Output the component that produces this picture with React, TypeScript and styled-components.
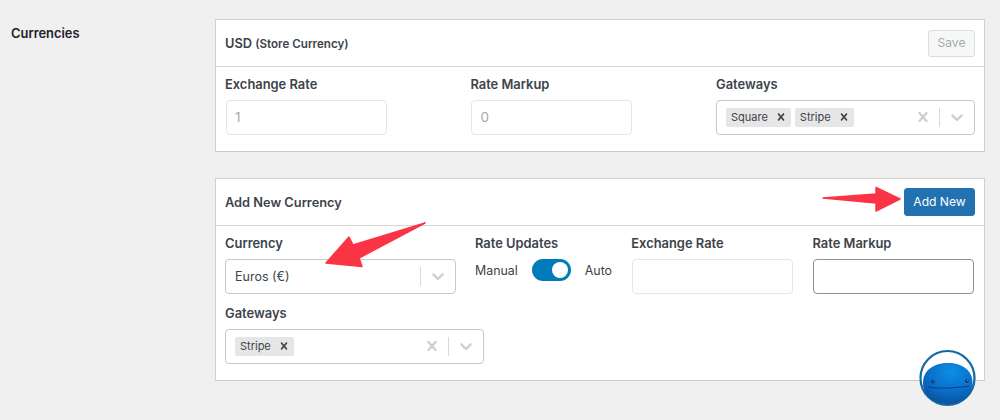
import React from "react";
import styled, { createGlobalStyle } from "styled-components";

const Global = createGlobalStyle`
  html, body { margin: 0; padding: 0; background: #f0f0f1; }
  body { font-family: Inter, "Liberation Sans", sans-serif; color: #3c434a; -webkit-font-smoothing: antialiased; }
  * { box-sizing: border-box; }
`;
const Page = styled.div`
  position: relative; width: 1000px; height: 420px; overflow: hidden;
  display: flex; padding-top: 19px; background: #f0f0f1;
`;
const SideLabel = styled.div`
  width: 215px; padding: 6px 0 0 11px; font-size: 12.9px; line-height: 18px; font-weight: 600; color: #1d2327;
`;
const Stack = styled.div`
  width: 770px; display: flex; flex-direction: column; gap: 26px;
`;
const Panel = styled.section`
  background: #fff; border: 1px solid #d0d0d2; border-bottom-color: #c9c9cb;
`;
const PanelHead = styled.header`
  height: 46px; padding: 0 9px; display: flex; align-items: center; justify-content: space-between;
  border-bottom: 1px solid #d6d6d8; box-sizing: content-box;
`;
const PanelTitle = styled.h3`
  margin: 0; padding-top: 1px; font-size: 12.8px; font-weight: 600; line-height: 18px; color: #3c434a;
  small { font-size: 11.6px; font-weight: 600; }
`;
const Button = styled.button<{ $primary?: boolean }>`
  height: ${p => (p.$primary ? 28 : 27)}px; width: ${p => (p.$primary ? 71 : 47)}px; padding: 0; border-radius: 3px;
  font: 400 ${p => (p.$primary ? 12.1 : 12)}px/1 Inter, "Liberation Sans", sans-serif;
  border: 1px solid ${p => (p.$primary ? "#2271b1" : "#dcdcde")};
  background: ${p => (p.$primary ? "#2271b1" : "#f6f7f7")};
  color: ${p => (p.$primary ? "#fff" : "#a7aaad")};
`;
const Body = styled.div`
  padding: 8px 9px 16.5px; display: flex; flex-direction: column; gap: 10.5px;
`;
const Row = styled.div`
  display: flex;
`;
const Field = styled.div<{ $w: number }>`
  width: ${p => p.$w}px; flex: none;
`;
const Label = styled.label`
  display: block; height: 18px; margin-bottom: 7px; padding-top: 1px; font-size: 12.9px; line-height: 18px; font-weight: 600; color: #3c434a;
`;
const TextInput = styled.input<{ $strong?: boolean }>`
  display: block; width: 160.5px; height: 34.5px; margin: 0 1px; padding: 0 8px; border-radius: 4px;
  font: 400 13.5px Inter, "Liberation Sans", sans-serif; color: #a7aaad; background: #fff; outline: none;
  border: 1px solid ${p => (p.$strong ? "#8c8f94" : "#e6e6e8")};
`;
const SelectBox = styled.div<{ $w: number }>`
  width: ${p => p.$w}px; height: 34.5px; display: flex; align-items: center; padding: 0 7px 0 9px;
  border: 1px solid #c8c8ca; border-radius: 4px; background: #fff;
`;
const SelectValues = styled.div`
  flex: 1; display: flex; align-items: center; gap: 4px; font-size: 12.5px; color: #3c434a;
`;
const Tag = styled.span`
  height: 19px; display: inline-flex; align-items: center; gap: 6px; padding: 0 3px 0 5px; background: #e6e6e6;
  border-radius: 2px; font-size: 11px; color: #3c434a;
  svg { fill: #3c434a; display: block; }
`;
const Indicator = styled.svg`
  width: 20px; height: 20px; fill: #cfcfcf; flex: none; display: block;
`;
const IndicatorBar = styled.span`
  width: 1px; height: 19px; background: #d8d8d8; margin: 0 7px 0 6px; flex: none;
`;
const ToggleRow = styled.div`
  display: flex; align-items: center; height: 22px; margin-top: 3px; font-size: 12.4px; color: #3c434a;
`;
const Track = styled.span`
  width: 39px; height: 22px; border-radius: 11px; background: #007cba; margin: 0 14px;
  display: flex; align-items: center; justify-content: flex-end; padding-right: 3px;
`;
const Knob = styled.span`
  width: 16px; height: 16px; border-radius: 50%; background: #fff;
`;
const Overlay = styled.svg`
  position: absolute; left: 0; top: 0; width: 1000px; height: 420px; pointer-events: none;
`;

const CLEAR = "M14.348 14.849c-0.469 0.469-1.229 0.469-1.697 0l-2.651-3.030-2.651 3.029c-0.469 0.469-1.229 0.469-1.697 0-0.469-0.469-0.469-1.229 0-1.697l2.758-3.15-2.759-3.152c-0.469-0.469-0.469-1.228 0-1.697s1.228-0.469 1.697 0l2.652 3.031 2.651-3.031c0.469-0.469 1.228-0.469 1.697 0s0.469 1.229 0 1.697l-2.758 3.152 2.758 3.15c0.469 0.469 0.469 1.229 0 1.698z";
const CHEV = "M4.516 7.548c0.436-0.446 1.043-0.481 1.576 0l3.908 3.747 3.908-3.747c0.533-0.481 1.141-0.446 1.576 0 0.436 0.445 0.408 1.197 0 1.615-0.406 0.418-4.695 4.502-4.695 4.502-0.217 0.223-0.502 0.335-0.789 0.335s-0.572-0.112-0.791-0.335c0 0-4.287-4.084-4.695-4.502s-0.436-1.17 0-1.615z";

const Chip = ({ name }: { name: string }) => (
  <Tag>
    {name}
    <svg width="14" height="14" viewBox="0 0 20 20"><path d={CLEAR} /></svg>
  </Tag>
);

const Select = ({ w, clear, children }: { w: number; clear?: boolean; children: React.ReactNode }) => (
  <SelectBox $w={w}>
    <SelectValues>{children}</SelectValues>
    {clear && <Indicator viewBox="0 0 20 20"><path d={CLEAR} /></Indicator>}
    <IndicatorBar />
    <Indicator viewBox="0 0 20 20"><path d={CHEV} /></Indicator>
  </SelectBox>
);

export default function App() {
  return (
    <Page>
      <Global />
      <SideLabel>Currencies</SideLabel>
      <Stack>
        <Panel>
          <PanelHead>
            <PanelTitle>USD <small>(Store Currency)</small></PanelTitle>
            <Button disabled>Save</Button>
          </PanelHead>
          <Body>
            <Row>
              <Field $w={245.4}>
                <Label>Exchange Rate</Label>
                <TextInput value="1" readOnly />
              </Field>
              <Field $w={245.6}>
                <Label>Rate Markup</Label>
                <TextInput value="0" readOnly />
              </Field>
              <Field $w={259}>
                <Label>Gateways</Label>
                <Select w={259} clear><Chip name="Square" /><Chip name="Stripe" /></Select>
              </Field>
            </Row>
          </Body>
        </Panel>
        <Panel>
          <PanelHead>
            <PanelTitle>Add New Currency</PanelTitle>
            <Button $primary>Add New</Button>
          </PanelHead>
          <Body>
            <Row>
              <Field $w={250}>
                <Label>Currency</Label>
                <Select w={231}>Euros (€)</Select>
              </Field>
              <Field $w={156.3}>
                <Label>Rate Updates</Label>
                <ToggleRow>Manual<Track><Knob /></Track>Auto</ToggleRow>
              </Field>
              <Field $w={181.2}>
                <Label>Exchange Rate</Label>
                <TextInput readOnly />
              </Field>
              <Field $w={163}>
                <Label>Rate Markup</Label>
                <TextInput $strong readOnly />
              </Field>
            </Row>
            <Row>
              <Field $w={259}>
                <Label>Gateways</Label>
                <Select w={259} clear><Chip name="Stripe" /></Select>
              </Field>
            </Row>
          </Body>
        </Panel>
      </Stack>
      <Overlay viewBox="0 0 1000 420">
        <defs>
          <radialGradient id="whale" cx="58%" cy="22%" r="85%">
            <stop offset="0" stopColor="#0b8ee6" />
            <stop offset="0.55" stopColor="#0a6fca" />
            <stop offset="1" stopColor="#0a4c96" />
          </radialGradient>
        </defs>
        <g fill="#fb3445" stroke="#fb3445" strokeWidth="1.5" strokeLinejoin="round">
          <path d="M823 198 L876 194 L876 187.5 L900 199 L876 211 L876 203 Z" />
          <path d="M425 223 L353 245 L349 237 L326 263 L362 266.5 L359 258 Z" />
        </g>
        <circle cx="947.5" cy="378" r="27" fill="#fff" stroke="#146a9f" strokeWidth="2.2" />
        <path d="M923 383 C923 370 934 363 948 363 C962 363 972.5 370 972.5 383 C972.5 396 962 404 948 404 C934 404 923 396 923 383 Z" fill="url(#whale)" />
        <path d="M928 387 C940 389 955 388 969 386" fill="none" stroke="#0a3a78" strokeWidth="0.9" />
        <circle cx="933" cy="381.5" r="1.7" fill="#0b2c5c" />
        <circle cx="967" cy="381" r="1.7" fill="#0b2c5c" />
        <circle cx="933.4" cy="380.9" r="0.5" fill="#bfe0ff" />
        <circle cx="967.4" cy="380.4" r="0.5" fill="#bfe0ff" />
      </Overlay>
    </Page>
  );
}
